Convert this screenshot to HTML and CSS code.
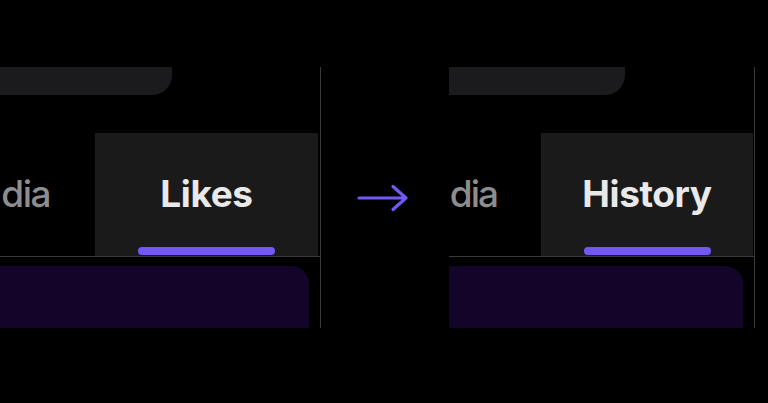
FILE: index.html
```html
<!DOCTYPE html>
<html lang="en">
<head>
<meta charset="utf-8">
<title>Likes to History</title>
<link rel="stylesheet" href="styles.css">
</head>
<body>
<main class="stage">
  <section class="panel panel-before">
    <div class="pill"></div>
    <div class="tabs">
      <div class="tab tab-media"><span class="label">dia</span></div>
      <div class="tab tab-active"><span class="label">Likes</span><span class="indicator"></span></div>
    </div>
    <div class="card"></div>
  </section>
  <div class="arrow">
    <svg width="53" height="28" viewBox="0 0 53 28" aria-hidden="true">
      <path d="M3 14H50M37 2.5L50 14L37 25.5" fill="none" stroke="#7458f7" stroke-width="3.2" stroke-linecap="round" stroke-linejoin="round"/>
    </svg>
  </div>
  <section class="panel panel-after">
    <div class="pill"></div>
    <div class="tabs">
      <div class="tab tab-media"><span class="label">dia</span></div>
      <div class="tab tab-active"><span class="label">History</span><span class="indicator"></span></div>
    </div>
    <div class="card"></div>
  </section>
</main>
</body>
</html>
```

FILE: styles.css
```css
html, body {
  margin: 0;
  padding: 0;
  background: #000;
}
body {
  width: 768px;
  height: 403px;
  overflow: hidden;
  font-family: Inter, "Liberation Sans", sans-serif;
}
.stage {
  display: flex;
  align-items: flex-start;
  padding-top: 67px;
}
.panel {
  display: flex;
  flex-direction: column;
  height: 261px;
  border-right: 1px solid #3a3a3c;
  overflow: hidden;
  flex-shrink: 0;
}
.panel-before { width: 320px; }
.panel-after { width: 305px; }

.pill {
  height: 28px;
  background: #1b1b1e;
  border-bottom-right-radius: 20px;
}
.panel-before .pill { width: 172px; }
.panel-after .pill { width: 176px; }

.tabs {
  display: flex;
  margin-top: 38px;
  height: 123px;
  border-bottom: 1px solid #3a3a3c;
}
.tab {
  display: flex;
  flex-direction: column;
  padding-top: 42px;
  box-sizing: border-box;
}
.label {
  font-size: 37px;
  line-height: 37px;
  white-space: nowrap;
  flex-shrink: 0;
}
.tab-media {
  flex-direction: row;
  justify-content: flex-end;
  align-items: flex-start;
  color: #8d8d8f;
}
.tab-media .label { font-weight: 500; }
.panel-before .tab-media { width: 95px; padding-right: 45px; }
.panel-before .tab-media .label { letter-spacing: -1.5px; }
.panel-after .tab-media { width: 92px; padding-right: 44px; }
.panel-after .tab-media .label { letter-spacing: -2px; }

.tab-active {
  align-items: center;
  background: #1a1a1a;
  color: #e9e9e9;
}
.tab-active .label {
  font-weight: 700;
  letter-spacing: -0.4px;
}
.panel-before .tab-active { width: 223px; margin-right: 2px; }
.panel-after .tab-active { width: 212px; margin-right: 1px; }

.indicator {
  margin-top: auto;
  margin-bottom: 1px;
  height: 8px;
  border-radius: 4px;
  background: #7458f7;
}
.panel-before .indicator { width: 137px; }
.panel-after .indicator { width: 127px; }

.card {
  margin-top: 9px;
  height: 62px;
  background: #13052a;
  border-top-right-radius: 18px;
}
.panel-before .card { width: 309px; }
.panel-after .card { width: 294px; }

.arrow {
  width: 128px;
  height: 261px;
  box-sizing: border-box;
  padding-left: 35px;
  display: flex;
  align-items: center;
  flex-shrink: 0;
}
.arrow svg { display: block; }
```
